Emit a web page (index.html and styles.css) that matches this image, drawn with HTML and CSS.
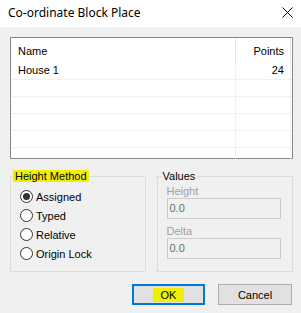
FILE: index.html
```html
<!DOCTYPE html>
<html lang="en">
<head>
<meta charset="UTF-8">
<title>Co-ordinate Block Place</title>
<link rel="stylesheet" href="styles.css">
</head>
<body>
  <div class="titlebar">
    <span class="title">Co-ordinate Block Place</span>
    <svg class="close" width="11" height="11" viewBox="0 0 11 11">
      <path d="M0.5 0.5 L10.5 10.5 M10.5 0.5 L0.5 10.5" stroke="#000" stroke-width="1" fill="none"/>
    </svg>
  </div>

  <div class="content">
    <div class="list">
      <div class="row head">
        <div class="cell name">Name</div>
        <div class="cell points">Points</div>
        <div class="cell rest"></div>
      </div>
      <div class="row">
        <div class="cell name">House 1</div>
        <div class="cell points">24</div>
        <div class="cell rest"></div>
      </div>
      <div class="row line"><div class="cell name"></div><div class="cell points"></div><div class="cell rest"></div></div>
      <div class="row line"><div class="cell name"></div><div class="cell points"></div><div class="cell rest"></div></div>
      <div class="row line"><div class="cell name"></div><div class="cell points"></div><div class="cell rest"></div></div>
      <div class="row line"><div class="cell name"></div><div class="cell points"></div><div class="cell rest"></div></div>
      <div class="row line last"><div class="cell name"></div><div class="cell points"></div><div class="cell rest"></div></div>
    </div>

    <div class="groups">
      <fieldset class="group method">
        <legend class="mark">Height Method</legend>
        <div class="radio"><span class="dot on"></span>Assigned</div>
        <div class="radio"><span class="dot"></span>Typed</div>
        <div class="radio"><span class="dot"></span>Relative</div>
        <div class="radio"><span class="dot"></span>Origin Lock</div>
      </fieldset>
      <fieldset class="group values">
        <legend>Values</legend>
        <div class="field-label">Height</div>
        <div class="field">0.0</div>
        <div class="field-label second">Delta</div>
        <div class="field">0.0</div>
      </fieldset>
    </div>

    <div class="buttons">
      <button class="btn default"><span class="mark">OK</span></button>
      <button class="btn">Cancel</button>
    </div>
  </div>
</body>
</html>
```

FILE: styles.css
```css
body {
  margin: 0;
  width: 301px;
  height: 313px;
  background: #f0f0f0;
  font-family: 'Liberation Sans', Arial, sans-serif;
  font-size: 11px;
  color: #000;
  overflow: hidden;
}
.titlebar {
  height: 27px;
  background: #fff;
  display: flex;
  align-items: center;
  justify-content: space-between;
  padding: 0 8px 2px 8px;
  box-sizing: border-box;
}
.title {
  font-family: 'Noto Sans', 'Open Sans', sans-serif;
  font-size: 12px;
}
.content {
  padding: 10px 8px 0 10px;
}

/* list view */
.list {
  width: 283px;
  height: 122px;
  box-sizing: border-box;
  border: 1px solid #828790;
  background: #fff;
}
.row {
  display: flex;
  height: 17px;
}
.row.head {
  height: 24px;
}
.row.line {
  border-top: 1px solid #f0f0f0;
  height: 16px;
}
.row.last {
  border-bottom: 1px solid #f0f0f0;
}
.cell {
  box-sizing: border-box;
  line-height: 17px;
}
.head .cell {
  line-height: 26px;
}
.cell.name {
  width: 225px;
  padding-left: 7px;
  border-right: 1px solid #f0f0f0;
}
.cell.points {
  width: 55px;
  text-align: right;
  padding-right: 6px;
  border-right: 1px solid #f0f0f0;
}
.head .cell.name,
.head .cell.points {
  border-right-color: #e5e5e5;
}
.cell.rest {
  flex: 1;
}

/* group boxes */
.groups {
  display: flex;
  margin-top: 11px;
}
.group {
  margin: 0;
  padding: 0;
  border: 1px solid #dcdcdc;
  height: 102px;
  box-sizing: border-box;
  min-width: 0;
}
.group legend {
  padding: 0 2px;
  line-height: 12px;
  height: 12px;
}
.method {
  width: 136px;
}
.method legend {
  margin-left: 2px;
}
.values {
  width: 137px;
  margin-left: 11px;
}
.values legend {
  margin-left: 4px;
  padding: 0 1px;
}
.mark {
  background: #f0f000;
}
.radio {
  display: flex;
  align-items: center;
  height: 19px;
  padding-left: 9px;
}
.method .radio:first-of-type {
  margin-top: 5px;
}
.dot {
  width: 13px;
  height: 13px;
  box-sizing: border-box;
  border: 1px solid #333;
  border-radius: 50%;
  background: #fff;
  margin-right: 3px;
  display: flex;
  align-items: center;
  justify-content: center;
}
.dot.on::after {
  content: "";
  width: 7px;
  height: 7px;
  border-radius: 50%;
  background: #333;
}
.field-label {
  color: #a0a0a0;
  padding-left: 9px;
  line-height: 12px;
  margin-top: 3px;
}
.field-label.second {
  margin-top: 6px;
}
.field {
  margin: 1px 0 0 9px;
  width: 114px;
  height: 21px;
  box-sizing: border-box;
  border: 1px solid #cccccc;
  background: #f0f0f0;
  color: #6d6d6d;
  padding-left: 2px;
  line-height: 19px;
}

/* buttons */
.buttons {
  display: flex;
  justify-content: flex-end;
  gap: 13px;
  margin-top: 12px;
  padding-right: 1px;
}
.btn {
  height: 21px;
  width: 74px;
  box-sizing: border-box;
  border: 1px solid #adadad;
  background: #e1e1e1;
  font-family: 'Liberation Sans', Arial, sans-serif;
  font-size: 11px;
  padding: 0;
  color: #000;
}
.btn.default {
  width: 73px;
  border: 2px solid #0078d7;
}
.btn .mark {
  display: inline-block;
  padding: 1px 8px;
  line-height: 12px;
}
```
